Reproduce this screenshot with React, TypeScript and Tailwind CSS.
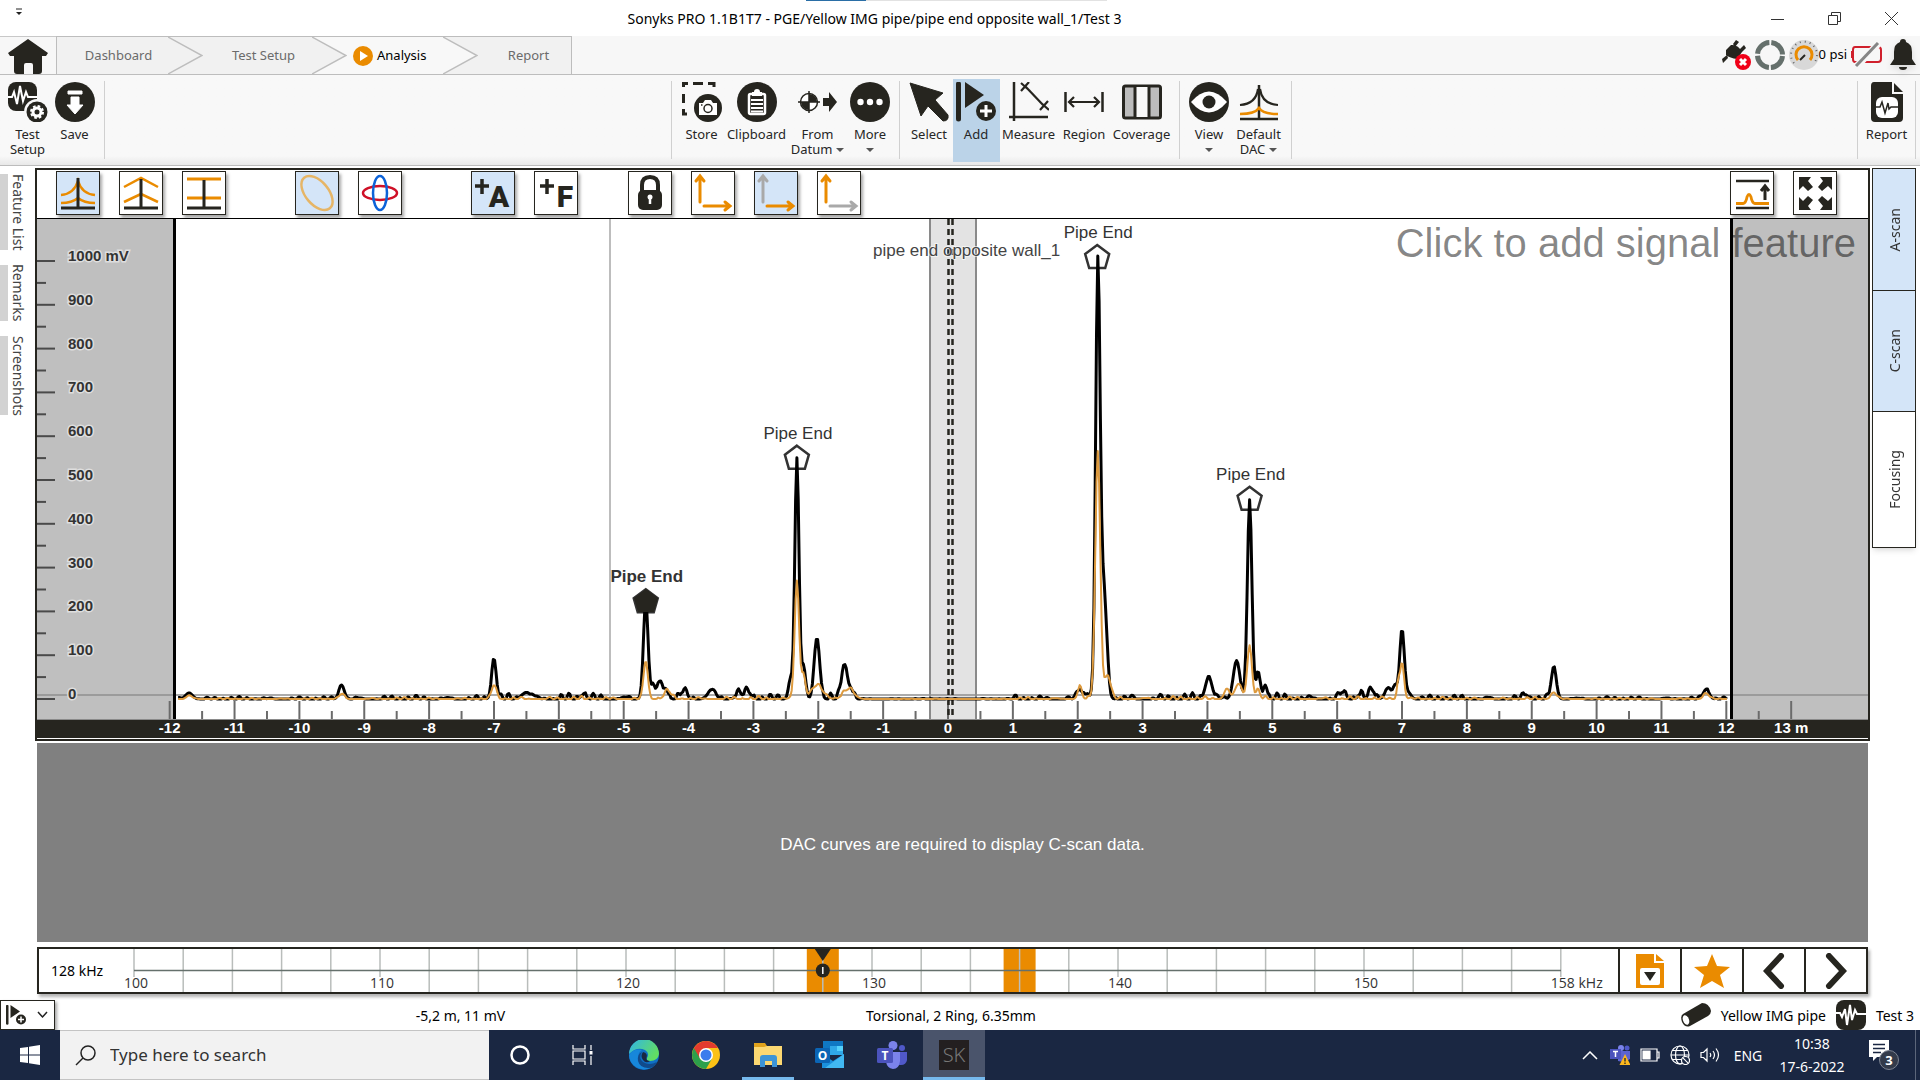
import type { ReactNode } from 'react';
import { clsx } from 'clsx';

const INK = '#26251f';
const ORANGE = '#ea8b00';

/* ---------- signal data ---------- */

// [position m, amplitude mV, width m]
type Peak = [number, number, number];

const blackPeaks: Peak[] = [
  [-11.7, 14, 0.05], [-9.35, 32, 0.04], [-7, 92, 0.035], [-6.5, 15, 0.07], [-5.62, 10, 0.04],
  [-4.66, 225, 0.035], [-4.56, 22, 0.03], [-4.46, 38, 0.035], [-4.36, 24, 0.04], [-4.08, 16, 0.05],
  [-3.65, 18, 0.06], [-3.22, 14, 0.05], [-3.08, 16, 0.04], [-2.43, 45, 0.03], [-2.33, 550, 0.032],
  [-2.23, 72, 0.03], [-2.02, 140, 0.042], [-1.6, 79, 0.042], [-1.5, 22, 0.04], [2.03, 22, 0.04],
  [2.15, 12, 0.04], [2.31, 975, 0.034], [2.4, 255, 0.045], [4.02, 50, 0.05], [4.45, 88, 0.05],
  [4.65, 455, 0.034], [4.78, 64, 0.03], [4.89, 32, 0.03], [6.08, 15, 0.04], [6.36, 11, 0.04],
  [6.54, 19, 0.04], [6.79, 26, 0.05], [6.9, 25, 0.03], [7, 155, 0.035], [7.1, 14, 0.04],
  [8.9, 10, 0.04], [9.34, 70, 0.04], [11.69, 22, 0.045],
];

const orangePeaks: Peak[] = [
  [-11.7, 8, 0.04], [-9.35, 11, 0.04], [-7, 32, 0.035], [-4.66, 88, 0.032], [-4.32, 18, 0.05],
  [-2.33, 270, 0.034], [-2.23, 55, 0.03], [-2.02, 30, 0.09], [-1.53, 22, 0.08], [2.03, 28, 0.03],
  [2.31, 565, 0.038], [2.46, 55, 0.045], [4.3, 24, 0.04], [4.48, 34, 0.05], [4.65, 122, 0.036],
  [4.78, 20, 0.03], [6.94, 36, 0.02], [7, 84, 0.03], [9.34, 15, 0.04], [11.69, 13, 0.04],
];

const features = [
  { m: -4.66, mv: 223, selected: true },
  { m: -2.33, mv: 551, selected: false },
  { m: 2.3, mv: 1009, selected: false },
  { m: 4.65, mv: 457, selected: false },
];

const xAt = (m: number) => 911 + 64.86 * m;
const yAt = (mv: number) => 480 - 0.438 * mv;

function noiseLevel(m: number) {
  if (m < -9.4) return 4;
  if (m < -7) return 6;
  if (m < -1.4) return 10;
  if (m < 1) return 1;
  if (m < 2) return 7;
  if (m < 7.3) return 10;
  if (m < 9.5) return 7;
  return 4;
}

function trace(peaks: Peak[], gain: number, seed: number) {
  const points: string[] = [];
  for (let m = -11.87; m <= 12.02; m += 0.02) {
    const wobble = Math.sin(m * 31 + seed) * Math.sin(m * 17.3 + seed * 2) + 0.5 * Math.sin(m * 53 + seed * 3);
    let value = Math.max(0, wobble) * noiseLevel(m) * gain;
    for (const [at, height, width] of peaks) {
      value += height * Math.exp(-((m - at) ** 2) / (2 * width * width));
    }
    points.push(`${xAt(m).toFixed(1)},${yAt(value).toFixed(1)}`);
  }
  return points.join(' ');
}

const blackTrace = trace(blackPeaks, 1, 1);
const orangeTrace = trace(orangePeaks, 0.5, 4);

/* ---------- ribbon icons ---------- */

function Icon({ children, box = '0 0 40 40', className = 'size-10' }: { children: ReactNode; box?: string; className?: string }) {
  return (
    <svg viewBox={box} className={clsx('shrink-0', className)} fill="none" aria-hidden="true">
      {children}
    </svg>
  );
}

function HomeIcon() {
  return (
    <Icon box="0 0 40 35" className="h-[35px] w-10">
      <path d="M20 0 40 14 38 17H34V32Q34 35 31 35H25V26Q25 24 23 24H18Q16 24 16 26V35H9Q6 35 6 32V17H2L0 14Z" fill={INK} />
    </Icon>
  );
}

function TestSetupIcon() {
  return (
    <Icon>
      <rect width="29" height="29" rx="8" fill={INK} />
      <path d="M0 15H4L6 10 9 22 12 4 15 19 18 10 20 15H29" stroke="#fff" strokeWidth="2" />
      <circle cx="29" cy="30" r="13" fill="#f8f8f8" />
      <circle cx="29" cy="30" r="10.5" fill={INK} />
      <circle cx="29" cy="30" r="4" stroke="#fff" strokeWidth="3" />
      <circle cx="29" cy="30" r="6" stroke="#fff" strokeWidth="2" strokeDasharray="2.6 2.1" />
    </Icon>
  );
}

function SaveIcon() {
  return (
    <Icon>
      <circle cx="20" cy="20" r="20" fill={INK} />
      <path d="M13 9H27V12H13ZM16 15H24V23H28L20 32 12 23H16Z" fill="#fff" stroke="#fff" strokeLinejoin="round" />
    </Icon>
  );
}

function StoreIcon() {
  return (
    <Icon>
      <path d="M0 1.500H6M11 1.500H21M26 1.500H33M1.500 0V5M1.500 12V21M1.500 27V33M0 32H5M32 0V5" stroke={INK} strokeWidth="3" />
      <circle cx="26" cy="26" r="14" fill={INK} />
      <path d="M17 21H21L23 18H29L31 21H35V33H17Z" fill="#fff" />
      <circle cx="26" cy="26.500" r="4" stroke={INK} strokeWidth="1.500" />
      <path d="M19 23H20.500" stroke={INK} strokeWidth="1.500" />
    </Icon>
  );
}

function ClipboardIcon() {
  return (
    <Icon>
      <circle cx="20" cy="20" r="20" fill={INK} />
      <rect x="12" y="12" width="16" height="20" rx="1.500" stroke="#fff" strokeWidth="2.500" />
      <path d="M15 10H17Q17 7 20 7T23 10H25V14H15Z" fill="#fff" />
      <path d="M14 18H26M14 22H26M14 26H26M14 29.500H26" stroke="#fff" strokeWidth="1.800" />
    </Icon>
  );
}

function DatumIcon() {
  return (
    <Icon>
      <circle cx="11" cy="20" r="8.500" stroke={INK} strokeWidth="1.500" fill="#fff" />
      <path d="M11 20V12A8 8 0 0 1 19 20ZM11 20V28A8 8 0 0 1 3 20Z" fill={INK} />
      <path d="M11 9V31M0 20H22" stroke={INK} strokeWidth="1.500" />
      <path d="M25 16H31V10L39 20 31 30V24H25Z" fill={INK} />
    </Icon>
  );
}

function MoreIcon() {
  return (
    <Icon>
      <circle cx="20" cy="20" r="20" fill={INK} />
      <circle cx="10.500" cy="20" r="3.200" fill="#fff" />
      <circle cx="20" cy="20" r="3.200" fill="#fff" />
      <circle cx="29.500" cy="20" r="3.200" fill="#fff" />
    </Icon>
  );
}

function SelectIcon() {
  return (
    <Icon>
      <path d="M1 1 34 11 26 18 39 33Q40 39 34 39L19 24 12 34Z" fill={INK} stroke={INK} strokeLinejoin="round" />
    </Icon>
  );
}

function AddIcon({ className = 'size-10', gap = '#bbd3e8' }: { className?: string; gap?: string }) {
  return (
    <Icon className={className}>
      <path d="M2.500 2V37" stroke={INK} strokeWidth="5" strokeLinecap="round" />
      <path d="M9 0 28 13 9 26Z" fill={INK} />
      <circle cx="30" cy="29" r="12" fill={gap} />
      <circle cx="30" cy="29" r="10" fill={INK} />
      <path d="M30 23V35M24 29H36" stroke="#fff" strokeWidth="3" />
    </Icon>
  );
}

function MeasureIcon() {
  return (
    <Icon>
      <path d="M5 0V39M0 35H39" stroke={INK} strokeWidth="2.500" />
      <path d="M16 4 35 24M12 1 21 9M20 0 12 9M31 20 40 28M39 19 31 28" stroke={INK} strokeWidth="2.200" />
    </Icon>
  );
}

function RegionIcon() {
  return (
    <Icon>
      <path d="M1.500 10V30M38.500 10V30" stroke={INK} strokeWidth="2.500" />
      <path d="M5 20H35M10 15 5 20 10 25M30 15 35 20 30 25" stroke={INK} strokeWidth="2.200" />
    </Icon>
  );
}

function CoverageIcon() {
  return (
    <Icon>
      <rect x="1.500" y="4" width="37" height="32" rx="2" fill="#bcbcbc" stroke={INK} strokeWidth="3" />
      <path d="M13 5H27V35H13Z" fill="#f8f8f8" />
      <path d="M13 4V36M27 4V36" stroke={INK} strokeWidth="3" />
    </Icon>
  );
}

function ViewIcon() {
  return (
    <Icon>
      <circle cx="20" cy="20" r="20" fill={INK} />
      <path d="M2 20Q20-1 38 20 20 41 2 20Z" fill="#fff" />
      <circle cx="20" cy="20" r="6.500" fill={INK} />
    </Icon>
  );
}

function DacIcon() {
  return (
    <Icon>
      <path d="M20 3V37M1 37H39" stroke={INK} strokeWidth="2.500" />
      <path d="M1 23Q17 22 19 7M39 23Q23 22 21 7" stroke={INK} strokeWidth="2.200" />
      <path d="M1 32Q16 32 20 26 24 32 39 32" stroke={ORANGE} strokeWidth="2.500" />
    </Icon>
  );
}

function ReportIcon() {
  return (
    <Icon>
      <path d="M7 0H25V12H36V36Q36 40 32 40H8Q4 40 4 36V4Q4 0 7 0Z" fill={INK} />
      <path d="M27 1 36 10H27Z" fill={INK} />
      <rect x="9" y="15" width="22" height="21" rx="6" fill="#fff" />
      <path d="M9 25H13L15 20 18 31 21 21 22 27 24 25H31" stroke={INK} strokeWidth="1.500" />
    </Icon>
  );
}

/* ---------- title bar ---------- */

function TitleBar() {
  return (
    <header className="relative flex h-9 items-center bg-white">
      <div className="absolute top-0 left-[42%] flex h-px w-[301px]">
        <span className="w-[60px] bg-[#2a6ea6]" />
        <span className="flex-1 bg-[#e2e2e2]" />
      </div>
      <button aria-label="Customize toolbar" className="flex h-full w-[38px] items-start justify-center pt-2">
        <svg viewBox="0 0 8 8" className="size-2" aria-hidden="true">
          <path d="M1 1H7" stroke="#222" />
          <path d="M1 4H7L4 7Z" fill="#222" />
        </svg>
      </button>
      <h1 className="flex-1 pr-[38px] text-center text-[14px]">
        Sonyks PRO 1.1B1T7 - PGE/Yellow IMG pipe/pipe end opposite wall_1/Test 3
      </h1>
      <div className="flex h-full">
        <button aria-label="Minimize" className="flex w-[57px] items-center justify-center">
          <svg viewBox="0 0 13 13" className="size-[13px]" aria-hidden="true">
            <path d="M0 7.500H13" stroke="#333" />
          </svg>
        </button>
        <button aria-label="Restore" className="flex w-[57px] items-center justify-center">
          <svg viewBox="0 0 13 13" className="size-[13px]" fill="none" stroke="#333" aria-hidden="true">
            <path d="M.5 3.500H9.500V12.500H.5ZM3.500 3V.5H12.500V9.500H10" />
          </svg>
        </button>
        <button aria-label="Close" className="flex w-[57px] items-center justify-center">
          <svg viewBox="0 0 13 13" className="size-[13px]" stroke="#333" aria-hidden="true">
            <path d="M0 0 13 13M13 0 0 13" />
          </svg>
        </button>
      </div>
    </header>
  );
}

/* ---------- navigation tabs ---------- */

function Chevron({ from, to }: { from: string; to: string }) {
  return (
    <svg viewBox="0 0 35 38" className="h-full w-[35px] shrink-0" preserveAspectRatio="none" aria-hidden="true">
      <path d="M0 0H35V38H0Z" fill={to} />
      <path d="M0 0 34 19 0 38Z" fill={from} />
      <path d="M0 0 34 19 0 38" fill="none" stroke="#bdbdbd" strokeWidth="1.500" />
    </svg>
  );
}

function NavTabs() {
  return (
    <div className="flex h-[39px] items-stretch justify-between border-b border-[#bdbdbd] bg-[#f7f7f7]">
      <nav className="flex items-stretch text-[13px] text-[#6b6b6b]">
        <a href="#home" aria-label="Home" className="flex w-14 items-end justify-center border-t border-[#c8c8c8]">
          <HomeIcon />
        </a>
        <a href="#dashboard" className="flex w-[147px] border-t border-l border-[#bdbdbd] bg-[#f1f1f1]">
          <span className="flex flex-1 items-center justify-center pl-3">Dashboard</span>
          <Chevron from="#f1f1f1" to="#f1f1f1" />
        </a>
        <a href="#setup" className="flex w-[144px] border-t border-[#bdbdbd] bg-[#f1f1f1]">
          <span className="flex flex-1 items-center justify-center pl-3">Test Setup</span>
          <Chevron from="#f1f1f1" to="#f8f8f8" />
        </a>
        <a href="#analysis" className="flex w-[131px] border-t border-[#bdbdbd] bg-[#f8f8f8] text-black" aria-current="page">
          <span className="flex flex-1 items-center gap-1 pl-1.5">
            <svg viewBox="0 0 20 20" className="size-5" aria-hidden="true">
              <circle cx="10" cy="10" r="10" fill={ORANGE} />
              <path d="M7 5 15 10 7 15Z" fill="#fff" />
            </svg>
            Analysis
          </span>
          <Chevron from="#f8f8f8" to="#f1f1f1" />
        </a>
        <a href="#report" className="flex w-[94px] items-center justify-center border-t border-r border-[#bdbdbd] bg-[#f1f1f1] pl-2">
          Report
        </a>
      </nav>
      <div className="flex items-center gap-1 pr-1 text-[13px]">
        <svg viewBox="0 0 30 30" className="size-[30px]" aria-hidden="true">
          <path d="M5 10 10 5Q17 4 21 12L16 19Q9 18 5 15ZM12 4 15 0 18 2 14 7ZM19 9 23 5 25 8 21 12ZM1 19 6 15 7 18 2 23Z" fill={INK} />
          <circle cx="22" cy="22" r="8" fill="#f00018" />
          <path d="M19 19 25 25M25 19 19 25" stroke="#fff" strokeWidth="3" />
        </svg>
        <svg viewBox="0 0 30 30" className="size-[30px]" aria-hidden="true">
          <circle cx="15" cy="15" r="12.500" fill="none" stroke="#65706c" strokeWidth="5" strokeDasharray="17.600 2.030" strokeDashoffset="-1" />
        </svg>
        <span className="flex items-center">
          <svg viewBox="0 0 30 30" className="size-[30px]" fill="none" aria-hidden="true">
            <circle cx="15" cy="15" r="15" fill="#d8d8d8" />
            <path d="M5 23A13 13 0 1 1 25 23" stroke="#666" strokeWidth="2" strokeDasharray="1 4" />
            <path d="M9 20A8 8 0 1 1 21 20" stroke={ORANGE} strokeWidth="3" />
            <path d="M11 20 16 15" stroke={INK} strokeWidth="2" />
          </svg>
          0 psi
        </span>
        <svg viewBox="0 0 31 26" className="h-[26px] w-[31px]" fill="none" aria-hidden="true">
          <path d="M4 5H27Q30 5 30 8V17Q30 20 27 20H4Q2 20 2 17V8Q2 5 4 5ZM1 9V16" stroke="#d0202c" strokeWidth="2" />
          <path d="M6 24 27 2" stroke="#f7f7f7" strokeWidth="7" />
          <path d="M5 24 27 1" stroke="#858585" strokeWidth="3" />
        </svg>
        <svg viewBox="0 0 26 32" className="ml-1 h-8 w-[26px] drop-shadow-md" fill={INK} aria-hidden="true">
          <path d="M10 3Q10 0 13 0T16 3Q22 5 22 13V20L26 26H0L4 20V13Q4 5 10 3ZM9 28H17Q17 31 13 31T9 28Z" />
        </svg>
      </div>
    </div>
  );
}

/* ---------- ribbon ---------- */

function Separator() {
  return <span className="mx-1.5 h-[78px] w-px self-start bg-[#d0d0d0]" />;
}

function RibbonButton({ icon, label, second, menu, width, active }: {
  icon: ReactNode;
  label: string;
  second?: string;
  menu?: boolean;
  width: string;
  active?: boolean;
}) {
  return (
    <button className={clsx('-mt-0.5 flex h-[83px] flex-col items-center pt-[3px] text-[13px] leading-[15px] whitespace-nowrap', width, active && 'bg-[#bbd3e8]')}>
      {icon}
      <span className="pt-[5px]">{label}</span>
      <span className="flex min-h-[15px] items-center gap-1">
        {second}
        {menu && <span className="border-x-4 border-t-4 border-x-transparent border-t-[#555]" />}
      </span>
    </button>
  );
}

function Ribbon() {
  return (
    <div className="flex h-[91px] items-start justify-between border-b border-[#bcbcbc] bg-linear-to-b from-[#f8f8f8] from-90% to-[#e8e8e8] pt-1.5 text-[#262626]">
      <div className="flex items-start pl-1">
        <RibbonButton icon={<TestSetupIcon />} label="Test" second="Setup" width="w-[47px]" />
        <RibbonButton icon={<SaveIcon />} label="Save" width="w-[47px]" />
        <Separator />
      </div>
      <div className="flex items-start">
        <Separator />
        <RibbonButton icon={<StoreIcon />} label="Store" width="w-12" />
        <RibbonButton icon={<ClipboardIcon />} label="Clipboard" width="w-[62px]" />
        <RibbonButton icon={<DatumIcon />} label="From" second="Datum" menu width="w-[60px]" />
        <RibbonButton icon={<MoreIcon />} label="More" menu width="w-[45px]" />
        <Separator />
        <RibbonButton icon={<SelectIcon />} label="Select" width="w-[47px]" />
        <RibbonButton icon={<AddIcon />} label="Add" width="w-[47px]" active />
        <RibbonButton icon={<MeasureIcon />} label="Measure" width="w-[58px]" />
        <RibbonButton icon={<RegionIcon />} label="Region" width="w-[53px]" />
        <RibbonButton icon={<CoverageIcon />} label="Coverage" width="w-[62px]" />
        <Separator />
        <RibbonButton icon={<ViewIcon />} label="View" menu width="w-[47px]" />
        <RibbonButton icon={<DacIcon />} label="Default" second="DAC" menu width="w-[52px]" />
        <Separator />
      </div>
      <div className="flex items-start">
        <Separator />
        <RibbonButton icon={<ReportIcon />} label="Report" width="w-[45px]" />
        <span className="mr-1 ml-1.5 h-[78px] w-px bg-[#d0d0d0]" />
      </div>
    </div>
  );
}

/* ---------- chart tool buttons ---------- */

function ToolButton({ label, active, children }: { label: string; active?: boolean; children: ReactNode }) {
  return (
    <button
      aria-label={label}
      className={clsx('size-11 shrink-0 border border-[#26251f] shadow-[2px_3px_3px_rgba(0,0,0,0.35)]', active ? 'bg-[#d4e5f8]' : 'bg-white')}
    >
      <svg viewBox="0 0 42 42" className="size-full" fill="none" aria-hidden="true">
        {children}
      </svg>
    </button>
  );
}

function AxisArrows({ up, right }: { up: string; right: string }) {
  return (
    <>
      <path d="M8 30V5M4 9 8 4 12 9" stroke={up} strokeWidth="3" strokeLinecap="round" />
      <path d="M12 34H37M33 30 38 34 33 38" stroke={right} strokeWidth="3" strokeLinecap="round" />
    </>
  );
}

function ChartToolbar() {
  return (
    <div className="flex h-[49px] items-start justify-between border-b border-black bg-white pt-px pr-[31px] pl-[19px]">
      <div className="flex gap-[19px]">
        <ToolButton label="Curved DAC" active>
          <path d="M4 23Q17 22 21 9 25 22 38 23M4 31Q15 31 21 26 27 31 38 31" stroke={ORANGE} strokeWidth="2.500" />
          <path d="M21 6V36M4 36H38" stroke={INK} strokeWidth="3" />
        </ToolButton>
        <ToolButton label="Linear DAC">
          <path d="M4 15 21 6 38 15M4 30 21 22 38 30" stroke={ORANGE} strokeWidth="2.500" />
          <path d="M21 7V36M4 36H38" stroke={INK} strokeWidth="3" />
        </ToolButton>
        <ToolButton label="Flat DAC">
          <path d="M4 7H38M4 26H38" stroke={ORANGE} strokeWidth="3" />
          <path d="M21 8V36M4 36H38" stroke={INK} strokeWidth="3" />
        </ToolButton>
        <span className="w-[31px]" />
        <ToolButton label="Ellipse" active>
          <ellipse cx="21" cy="21" rx="20" ry="11.500" transform="rotate(50 21 21)" stroke="#e6b566" strokeWidth="2.500" />
        </ToolButton>
        <ToolButton label="Modes">
          <ellipse cx="21" cy="21" rx="17" ry="7" stroke="#cf1027" strokeWidth="2.500" />
          <ellipse cx="21" cy="21" rx="7" ry="17" stroke="#0c62d8" strokeWidth="2.500" />
        </ToolButton>
        <span className="w-[31px]" />
        <ToolButton label="Add A" active>
          <path d="M10 7V22M3 14H17" stroke={INK} strokeWidth="3.500" />
          <text x="27" y="35" textAnchor="middle" fontFamily="Roboto, sans-serif" fontWeight="900" fontSize="30" fill={INK}>A</text>
        </ToolButton>
        <ToolButton label="Add F">
          <path d="M12 7V22M5 14H19" stroke={INK} strokeWidth="3.500" />
          <text x="30" y="35" textAnchor="middle" fontFamily="Roboto, sans-serif" fontWeight="900" fontSize="30" fill={INK}>F</text>
        </ToolButton>
        <span className="w-3" />
        <ToolButton label="Lock">
          <path d="M13 20V13Q13 5 21 5T29 13V20" stroke={INK} strokeWidth="4" />
          <rect x="9" y="18" width="24" height="20" rx="5" fill={INK} />
          <path d="M21 25V32" stroke="#fff" strokeWidth="2.500" />
          <circle cx="21" cy="25" r="2.500" fill="#fff" />
        </ToolButton>
        <ToolButton label="Scale both axes">
          <AxisArrows up={ORANGE} right={ORANGE} />
        </ToolButton>
        <ToolButton label="Scale distance" active>
          <AxisArrows up="#a9a9a9" right={ORANGE} />
        </ToolButton>
        <ToolButton label="Scale amplitude">
          <AxisArrows up={ORANGE} right="#a9a9a9" />
        </ToolButton>
      </div>
      <div className="flex gap-[19px]">
        <ToolButton label="Threshold">
          <path d="M5 9H38M5 36H38" stroke={INK} strokeWidth="2.500" />
          <path d="M34 28V15M30 19 34 14 38 19" stroke={INK} strokeWidth="3" />
          <path d="M5 31.500H12Q15 31 16 25 18 20 20 25 21 31 24 31.500H38" stroke={ORANGE} strokeWidth="2.800" />
        </ToolButton>
        <ToolButton label="Full screen">
          <path
            d="M5 5H17L14 9 19 15 14 19 9 14 5 18ZM38 5H26L29 9 24 15 28 19 34 14 38 18ZM5 38H17L14 34 19 28 14 24 9 29 5 25ZM38 38H26L29 34 24 28 28 24 34 29 38 25Z"
            fill={INK}
          />
        </ToolButton>
      </div>
    </div>
  );
}

/* ---------- A-scan ---------- */

function AScan() {
  const mvTicks = Array.from({ length: 21 }, (_, i) => i * 50);
  const mTicks = Array.from({ length: 51 }, (_, i) => -12 + i / 2);

  return (
    <svg viewBox="0 0 1831 520" className="block h-auto w-full" fontFamily="'Liberation Sans', Arial, sans-serif" role="img" aria-label="A-scan">
      <rect width="1831" height="520" fill="#fff" />
      <rect width="137" height="500" fill="#bfbfbf" />
      <rect x="1694" width="137" height="500" fill="#bfbfbf" />
      <rect x="892" width="47" height="500" fill="#e3e3e3" />
      <path d="M893 0V500M939 0V500" stroke="#8a8a8a" strokeWidth="2" />
      <path d="M0 476H1831" stroke="#8f8f8f" strokeWidth="1.500" />
      <path d="M573 0V500" stroke="#bdbdbd" strokeWidth="2" />

      {/* mV scale */}
      {mvTicks.map((mv) => (
        <path key={mv} d={`M0 ${yAt(mv)}H${mv % 100 === 0 ? 18 : 9}`} stroke="#4a4a4a" strokeWidth="2" />
      ))}
      {mvTicks.filter((mv) => mv % 100 === 0).map((mv) => (
        <text
          key={mv}
          x="31"
          y={yAt(mv)}
          fontSize="15"
          fontWeight="bold"
          fill="#333"
          stroke="#dedede"
          strokeWidth="3"
          paintOrder="stroke"
        >
          {mv === 1000 ? '1000 mV' : mv}
        </text>
      ))}

      {/* distance scale */}
      {mTicks.map((m) => (
        <path key={m} d={`M${xAt(m)} ${Number.isInteger(m) ? 482 : 492}V500`} stroke="#6b6b6b" strokeWidth="2" />
      ))}
      <rect y="501" width="1831" height="18" fill={INK} />
      <path d="M0 500.500H1831" stroke="#8a8a8a" />
      {mTicks.filter(Number.isInteger).map((m) => (
        <text key={m} x={xAt(m)} y="514" fontSize="15" fontWeight="bold" fill="#fff" textAnchor="middle">
          {m === 13 ? '13 m' : m}
        </text>
      ))}

      <path d="M137.500 0V500M1694.500 0V500" stroke="#000" strokeWidth="3" />
      <path d="M911.500 0V500M915.500 0V500" stroke={INK} strokeWidth="2.500" strokeDasharray="6 4" />

      <text x="836" y="37" fontSize="17" fill="#444" stroke="#fff" strokeWidth="2" strokeOpacity="0.6" paintOrder="stroke">
        pipe end opposite wall_1
      </text>

      {features.map(({ m, mv, selected }) => (
        <g key={m} transform={`translate(${xAt(m)} ${yAt(mv)})`}>
          <path d="M0-12 12-3 8 11H-8L-12-3Z" fill={selected ? INK : '#fff'} stroke="#333" strokeWidth="2.500" />
          <text x="1" y="-19" fontSize="17" fontWeight={selected ? 'bold' : 'normal'} fill="#333" textAnchor="middle">
            Pipe End
          </text>
        </g>
      ))}

      <polyline points={blackTrace} fill="none" stroke="#000" strokeWidth="3" strokeLinejoin="round" />
      <polyline points={orangeTrace} fill="none" stroke="#dd9a3e" strokeWidth="2" strokeLinejoin="round" />
      <path d="M609-12 621-3 617 11H601L597-3Z" transform="translate(0 382)" fill={INK} />

      <text x="1819" y="38" fontSize="40" fill="#000" fillOpacity="0.48" textAnchor="end">
        Click to add signal feature
      </text>
    </svg>
  );
}

/* ---------- side tabs ---------- */

function LeftTabs() {
  const tabs = [
    { label: 'Feature List', height: 'h-[76px]' },
    { label: 'Remarks', height: 'h-[56px]' },
    { label: 'Screenshots', height: 'h-[79px]' },
  ];
  return (
    <aside className="flex w-[35px] shrink-0 flex-col gap-[15px] pt-[6px]">
      {tabs.map(({ label, height }) => (
        <button key={label} className={clsx('flex items-center border-l-8 border-[#d2d2d2] text-[14px] whitespace-nowrap text-[#444]', height)}>
          <span className="[writing-mode:vertical-rl]">{label}</span>
        </button>
      ))}
    </aside>
  );
}

function RightTabs() {
  const tabs = [
    { label: 'A-scan', className: 'h-[123px] bg-[#d4e5f8]' },
    { label: 'C-scan', className: 'h-[122px] bg-[#d4e5f8]' },
    { label: 'Focusing', className: 'h-[137px] bg-white shadow-md' },
  ];
  return (
    <aside className="flex w-[50px] shrink-0 flex-col pr-1 pl-0.5">
      {tabs.map(({ label, className }) => (
        <button key={label} className={clsx('-mb-px flex items-center justify-center border border-[#26251f] text-[14px] text-[#333]', className)}>
          <span className="rotate-180 [writing-mode:vertical-rl]">{label}</span>
        </button>
      ))}
    </aside>
  );
}

/* ---------- frequency bar ---------- */

function FrequencyBar() {
  const fx = (khz: number) => 14 + (khz - 100) * 24.6;
  const lines = Array.from({ length: 30 }, (_, i) => 100 + i * 2);
  const labelled = [100, 110, 120, 130, 140, 150, 158];

  return (
    <div className="mx-[2px] mt-[5px] flex h-[47px] items-stretch border-2 border-[#26251f] bg-white shadow-[2px_3px_3px_rgba(0,0,0,0.3)]">
      <span className="flex w-[81px] shrink-0 items-center pl-3 text-[14px]">128 kHz</span>
      <svg viewBox="0 0 1498 43" className="h-full min-w-0 flex-1 overflow-visible" fontFamily="'Open Sans', sans-serif" role="img" aria-label="Frequency scale">
        <rect x={fx(128) - 16} width="32" height="43" fill={ORANGE} />
        <rect x={fx(136) - 16} width="32" height="43" fill={ORANGE} />
        {lines.map((khz) => (
          <path key={khz} d={`M${fx(khz)} 0V${labelled.includes(khz) ? 28 : 43}`} stroke="#b9bdbb" strokeWidth="1.500" />
        ))}
        <path d="M14 21.500H1441" stroke="#65706c" strokeWidth="1.500" />
        {labelled.map((khz) => (
          <text key={khz} x={fx(khz) - 10} y="39" fontSize="14" fill="#333">
            {khz === 158 ? '158 kHz' : khz}
          </text>
        ))}
        <path d={`M${fx(128) - 8} 0h16l-8 12Z`} fill={INK} />
        <circle cx={fx(128)} cy="21.500" r="7" fill={INK} />
        <path d={`M${fx(128)} 18v7`} stroke="#fff" strokeWidth="1.500" />
      </svg>
      <div className="flex shrink-0">
        <button aria-label="Saved frequencies" className="flex w-[62px] items-center justify-center border-l-2 border-[#26251f]">
          <svg viewBox="0 0 28 34" className="h-[34px] w-7" aria-hidden="true">
            <path d="M0 0H18V9H28V34H0ZM20 0 28 7H20Z" fill={ORANGE} />
            <rect x="4" y="14" width="20" height="17" rx="2" fill="#fff" />
            <path d="M8 18H20L14 27Z" fill={INK} />
          </svg>
        </button>
        <button aria-label="Favourite" className="flex w-[62px] items-center justify-center border-l-2 border-[#26251f]">
          <svg viewBox="0 0 36 34" className="h-[34px] w-9" aria-hidden="true">
            <path d="M18 0 23 12 36 13 26 21 30 34 18 27 6 34 10 21 0 13 13 12Z" fill={ORANGE} />
          </svg>
        </button>
        <button aria-label="Previous" className="flex w-[62px] items-center justify-center border-l-2 border-[#26251f]">
          <svg viewBox="0 0 22 36" className="h-9 w-[22px]" fill="none" aria-hidden="true">
            <path d="M18 3 4 18 18 33" stroke={INK} strokeWidth="6" strokeLinecap="round" />
          </svg>
        </button>
        <button aria-label="Next" className="flex w-[62px] items-center justify-center border-l-2 border-[#26251f]">
          <svg viewBox="0 0 22 36" className="h-9 w-[22px]" fill="none" aria-hidden="true">
            <path d="M4 3 18 18 4 33" stroke={INK} strokeWidth="6" strokeLinecap="round" />
          </svg>
        </button>
      </div>
    </div>
  );
}

/* ---------- status bar ---------- */

function StatusBar() {
  return (
    <footer className="mt-[6px] grid h-[30px] grid-cols-[48fr_auto_49fr] items-center bg-white text-[14px]">
      <div className="flex items-center self-stretch">
        <button aria-label="Add tool" className="flex h-full w-[55px] items-center justify-between border border-[#26251f] bg-white pr-1.5 pl-[5px] shadow-[2px_2px_3px_rgba(0,0,0,0.35)]">
          <AddIcon className="size-5" gap="#fff" />
          <svg viewBox="0 0 11 8" className="h-2 w-[11px]" fill="none" aria-hidden="true">
            <path d="M1 1 5.500 6 10 1" stroke="#222" strokeWidth="1.500" />
          </svg>
        </button>
        <span className="flex-1 text-center">-5,2 m, 11 mV</span>
      </div>
      <span>Torsional, 2 Ring, 6.35mm</span>
      <div className="flex items-center justify-end pr-1.5">
        <svg viewBox="0 0 30 24" className="mr-2.5 h-6 w-[30px]" aria-hidden="true">
          <path d="M2 11 21 0Q28 0 30 8 30 11 27 13L9 23Q4 25 1 19-1 13 2 11Z" fill={INK} />
          <ellipse cx="5" cy="17" rx="3" ry="5" transform="rotate(-20 5 17)" fill="#fff" />
        </svg>
        <span>Yellow IMG pipe</span>
        <svg viewBox="0 0 30 30" className="mr-2.5 ml-2.5 size-[30px]" fill="none" aria-hidden="true">
          <rect width="30" height="30" rx="8" fill={INK} />
          <path d="M0 13H4L6 17 9 9 11 25 14 5 16 20 19 10 21 14H30" stroke="#fff" strokeWidth="2" />
        </svg>
        <span>Test 3</span>
      </div>
    </footer>
  );
}

/* ---------- taskbar ---------- */

function TaskButton({ label, open, active, children }: { label: string; open?: boolean; active?: boolean; children: ReactNode }) {
  return (
    <button aria-label={label} className={clsx('relative flex w-[62px] items-center justify-center', active && 'bg-[#4a546b]')}>
      {children}
      {(open || active) && <span className={clsx('absolute bottom-0 h-[3px] bg-[#76b9ed]', active ? 'inset-x-0' : 'inset-x-[5px]')} />}
    </button>
  );
}

function TeamsLogo({ className }: { className: string }) {
  return (
    <svg viewBox="0 0 30 28" className={className} aria-hidden="true">
      <circle cx="25" cy="7" r="3" fill="#5059c9" />
      <circle cx="16" cy="4.500" r="4.500" fill="#7b83eb" />
      <path d="M21 11H30V19Q29 24 24 24H21Z" fill="#5059c9" />
      <path d="M9 11H23V20Q22 28 16 28 10 27 9 21Z" fill="#7b83eb" />
      <rect y="7" width="16" height="15" rx="1.500" fill="#4b53bc" />
      <text x="8" y="19" textAnchor="middle" fontSize="12" fontWeight="bold" fontFamily="'Open Sans', sans-serif" fill="#fff">T</text>
    </svg>
  );
}

function Taskbar() {
  return (
    <div className="flex h-[50px] items-stretch bg-[#1a2742] text-white">
      <button aria-label="Start" className="flex w-[60px] items-center justify-center">
        <svg viewBox="0 0 20 20" className="size-5" fill="#fff" aria-hidden="true">
          <path d="M0 3 8 2V9.500H0ZM9 1.800 20 0V9.500H9ZM0 10.500H8V18L0 17ZM9 10.500H20V20L9 18.200Z" />
        </svg>
      </button>
      <label className="flex w-[429px] items-center gap-3.5 border-y border-[#c4c4c4] bg-[#f2f2f2] pl-[15px]">
        <svg viewBox="0 0 21 21" className="size-[21px]" fill="none" stroke="#222" strokeWidth="1.500" aria-hidden="true">
          <circle cx="13" cy="8" r="7" />
          <path d="M8 13 1 20" />
        </svg>
        <input type="text" aria-label="Search" placeholder="Type here to search" className="min-w-0 flex-1 bg-transparent text-[17px] placeholder:text-[#333]" />
      </label>
      <TaskButton label="Cortana">
        <svg viewBox="0 0 20 20" className="size-5" fill="none" aria-hidden="true">
          <circle cx="10" cy="10" r="8.500" stroke="#fff" strokeWidth="2.500" />
        </svg>
      </TaskButton>
      <TaskButton label="Task view">
        <svg viewBox="0 0 21 20" className="h-5 w-[21px]" fill="none" stroke="#fff" strokeWidth="1.200" aria-hidden="true">
          <path d="M1 0V4H13V0M1 6H13V14H1ZM1 20V16H13V20M19 0V5M19 11V20" />
          <path d="M17.500 6H20.500V9.500H17.500Z" fill="#fff" stroke="none" />
        </svg>
      </TaskButton>
      <TaskButton label="Edge">
        <svg viewBox="0 0 30 30" className="size-[30px]" aria-hidden="true">
          <defs>
            <linearGradient id="edge-top" x1="0" y1="0" x2="1" y2="0.500">
              <stop offset="0" stopColor="#2fb5ea" />
              <stop offset="1" stopColor="#62dd62" />
            </linearGradient>
          </defs>
          <circle cx="15" cy="15" r="15" fill="#0f6fc5" />
          <path d="M0 14A15 15 0 0 1 30 14Q29 21 21 21 17 21 18 18 21 13 16 10 8 6 0 14Z" fill="url(#edge-top)" />
          <path d="M0 15Q5 8 13 10 8 13 10 19 12 27 21 28A15 15 0 0 1 0 15Z" fill="#1787db" />
          <path d="M13 12Q9 18 14 22 20 26 28 22 25 28 19 28 11 28 9 21 8 14 13 12Z" fill="#114a8b" />
          <path d="M14 12Q19 13 17.500 18 17 21 21 21 17 24 14 20 11 16 14 12Z" fill="#1a2742" />
        </svg>
      </TaskButton>
      <TaskButton label="Chrome">
        <svg viewBox="0 0 28 28" className="size-7" aria-hidden="true">
          <circle cx="14" cy="14" r="14" fill="#fbc116" />
          <path d="M14 14 1.900 7A14 14 0 0 0 14 28L20 17.500Z" fill="#2ca04b" />
          <path d="M14 14 8 17.500 1.900 7A14 14 0 0 1 26.100 7H14Z" fill="#e33b2e" />
          <circle cx="14" cy="14" r="7" fill="#fff" />
          <circle cx="14" cy="14" r="5.500" fill="#3b7ded" />
        </svg>
      </TaskButton>
      <TaskButton label="File Explorer" open>
        <svg viewBox="0 0 28 24" className="h-6 w-7" aria-hidden="true">
          <path d="M0 0H11L13 3H28V8H0Z" fill="#e0a21c" />
          <path d="M0 4H10L13 3H28V22H0Z" fill="#fcd872" />
          <path d="M6 24V15Q6 12 9 12H20Q23 12 23 15V24H18V18H11V24Z" fill="#3d94d6" />
        </svg>
      </TaskButton>
      <TaskButton label="Outlook">
        <svg viewBox="0 0 30 28" className="h-7 w-[30px]" aria-hidden="true">
          <path d="M8 0H28V14H8Z" fill="#0f78c4" />
          <path d="M15 5H28V14H15Z" fill="#2fa8e8" />
          <path d="M22 5H28V10H22Z" fill="#55d1fb" />
          <path d="M7 13 18 20 29 13V27H7Z" fill="#1a90dd" />
          <path d="M29 13V27H10Z" fill="#41b8f2" />
          <rect y="7" width="15" height="15" rx="1.500" fill="#0b65b5" />
          <text x="7.500" y="19" textAnchor="middle" fontSize="12" fontWeight="bold" fontFamily="'Open Sans', sans-serif" fill="#fff">O</text>
        </svg>
      </TaskButton>
      <TaskButton label="Teams">
        <TeamsLogo className="h-7 w-[30px]" />
      </TaskButton>
      <TaskButton label="Sonyks" active>
        <span className="flex size-[30px] items-center justify-center bg-[#231f20] text-[20px] font-light text-[#777]">SK</span>
      </TaskButton>
      <div className="flex flex-1 items-center justify-end pr-1">
        <button aria-label="Show hidden icons" className="flex w-[30px] justify-center">
          <svg viewBox="0 0 16 9" className="h-[9px] w-4" fill="none" stroke="#fff" strokeWidth="1.500" aria-hidden="true">
            <path d="M1 8 8 1 15 8" />
          </svg>
        </button>
        <span className="flex w-[30px] justify-center">
          <svg viewBox="0 0 20 20" className="size-5" aria-hidden="true">
            <circle cx="17" cy="3" r="2.500" fill="#5059c9" />
            <circle cx="11" cy="3" r="3" fill="#7b83eb" />
            <path d="M8 6H20V14Q16 18 8 16Z" fill="#5b63d0" />
            <rect y="4" width="11" height="10" fill="#4b53bc" />
            <path d="M3 6.500H8M5.500 6.500V12" stroke="#fff" strokeWidth="1.500" />
            <path d="M15 9 20.500 20H9.500Z" fill="#fdb81e" />
            <path d="M15 13V16.500M15 17.500V19" stroke="#222" strokeWidth="1.300" />
          </svg>
        </span>
        <span className="flex w-[30px] justify-center">
          <svg viewBox="0 0 20 14" className="h-3.5 w-5" fill="none" stroke="#fff" strokeWidth="1.200" aria-hidden="true">
            <path d="M1 1H17V13H1ZM17 4H19V10H17" />
            <path d="M3 3H10V11H3Z" fill="#fff" />
          </svg>
        </span>
        <span className="flex w-[30px] justify-center">
          <svg viewBox="0 0 20 20" className="size-5" fill="none" stroke="#fff" strokeWidth="1.200" aria-hidden="true">
            <circle cx="10" cy="10" r="9" />
            <ellipse cx="10" cy="10" rx="4.500" ry="9" />
            <path d="M1 10H19M2.500 5.500H17.500M2.500 14.500H12" />
            <circle cx="15.500" cy="15.500" r="4" fill="#1a2742" />
            <path d="M12.700 12.700 18.300 18.300" />
          </svg>
        </span>
        <span className="flex w-[30px] justify-center">
          <svg viewBox="0 0 20 16" className="h-4 w-5" fill="none" stroke="#fff" strokeWidth="1.200" aria-hidden="true">
            <path d="M1 5.500H3.500L7 2V14L3.500 10.500H1ZM10 6Q11.500 8 10 10M13 4Q16 8 13 12M16 1.500Q21 8 16 14.500" />
          </svg>
        </span>
        <span className="w-[46px] text-center text-[14px]">ENG</span>
        <time className="w-[82px] text-center text-[14px] leading-[23px]">
          10:38
          <br />
          17-6-2022
        </time>
        <button aria-label="Notifications, 3 new" className="flex w-[62px] items-center justify-center">
          <svg viewBox="0 0 32 30" className="h-[30px] w-8" aria-hidden="true">
            <path d="M1 0H21V17H9L5 21V17H1Z" fill="#fff" />
            <path d="M5 4.500H17M5 8.500H17M5 12.500H13" stroke="#1a2742" strokeWidth="1.300" />
            <circle cx="21" cy="20" r="9.500" fill="#333b4b" stroke="#7d8492" />
            <text x="21" y="25" textAnchor="middle" fontSize="13" fontWeight="bold" fontFamily="'Open Sans', sans-serif" fill="#fff">3</text>
          </svg>
        </button>
        <span className="h-full w-px bg-[#5c667a]" />
      </div>
    </div>
  );
}

export default function App() {
  return (
    <div className="flex min-h-screen flex-col bg-white font-['Noto_Sans','Open_Sans',sans-serif] text-black">
      <TitleBar />
      <NavTabs />
      <Ribbon />
      <main className="flex flex-1 items-stretch pt-[2px]">
        <LeftTabs />
        <div className="flex min-w-0 flex-1 flex-col">
          <section className="border-2 border-[#26251f]">
            <ChartToolbar />
            <AScan />
          </section>
          <section className="mx-[2px] mt-[2px] flex min-h-[199px] flex-1 items-center justify-center bg-[#808080]">
            <p className="pt-1 pl-5 font-['Liberation_Sans',Arial,sans-serif] text-[17px] text-white">DAC curves are required to display C-scan data.</p>
          </section>
          <FrequencyBar />
        </div>
        <RightTabs />
      </main>
      <StatusBar />
      <Taskbar />
    </div>
  );
}
